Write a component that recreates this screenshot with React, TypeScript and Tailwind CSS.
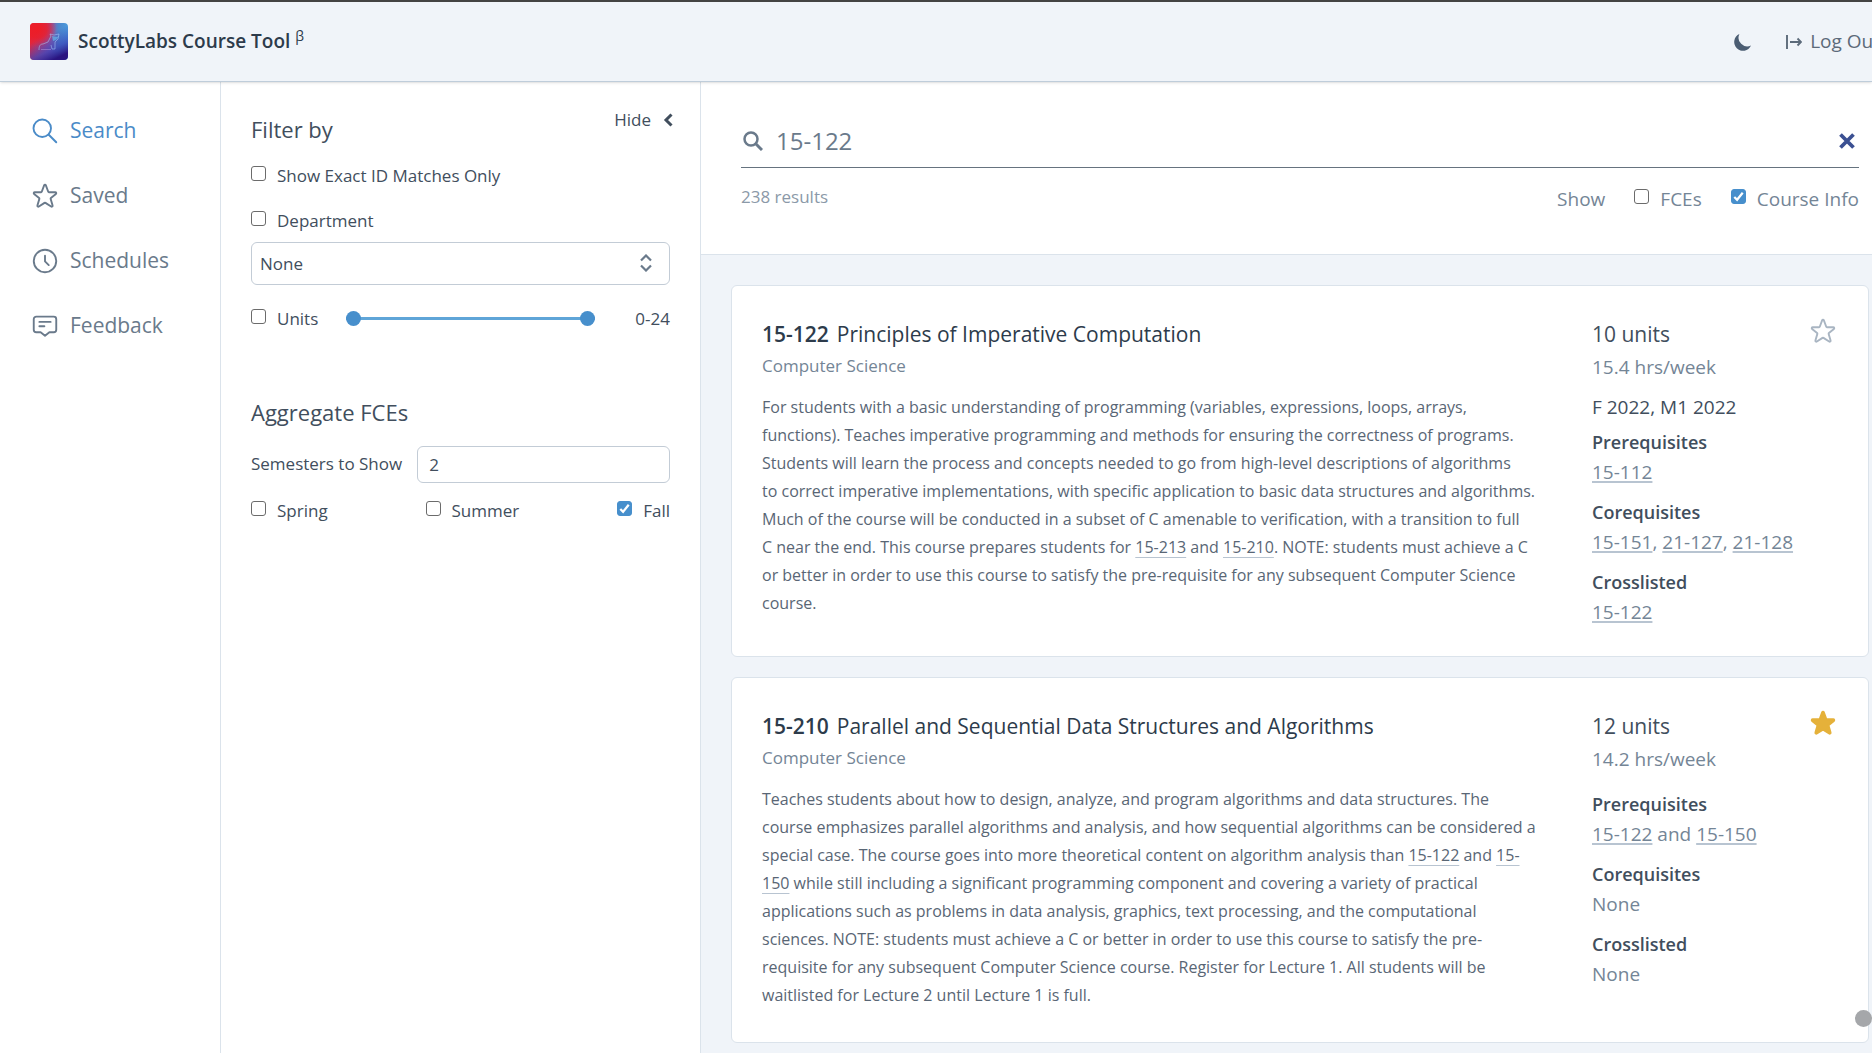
import React from "react";

type IconProps = { className?: string };

function SearchOutline({ className }: IconProps) {
  return (
    <svg viewBox="0 0 24 24" fill="none" stroke="currentColor" strokeWidth="1.5" strokeLinecap="round" strokeLinejoin="round" className={className} aria-hidden="true">
      <circle cx="9.8" cy="9.8" r="7" />
      <path d="M15 15 21 21" />
    </svg>
  );
}

function StarIcon({ className, filled = false }: IconProps & { filled?: boolean }) {
  return (
    <svg viewBox="0 0 24 24" fill={filled ? "currentColor" : "none"} stroke="currentColor" strokeWidth="1.5" strokeLinecap="round" strokeLinejoin="round" className={className} aria-hidden="true">
      <path d="M11.3 3.5a.75.75 0 0 1 1.4 0l1.9 5.1a.6.6 0 0 0 .55.4h5.1a.75.75 0 0 1 .47 1.34l-4 3.3a.6.6 0 0 0-.2.65l1.55 5.25a.78.78 0 0 1-1.18.86l-4.5-2.9a.7.7 0 0 0-.78 0l-4.5 2.9a.78.78 0 0 1-1.18-.86l1.55-5.25a.6.6 0 0 0-.2-.65l-4-3.3A.75.75 0 0 1 3.75 9h5.1a.6.6 0 0 0 .55-.4z" />
    </svg>
  );
}

function ClockIcon({ className }: IconProps) {
  return (
    <svg viewBox="0 0 24 24" fill="none" stroke="currentColor" strokeWidth="1.5" strokeLinecap="round" strokeLinejoin="round" className={className} aria-hidden="true">
      <circle cx="12" cy="12" r="9" />
      <path d="M12 7.8V12.3l3 3" />
    </svg>
  );
}

function FeedbackIcon({ className }: IconProps) {
  return (
    <svg viewBox="0 0 24 24" fill="none" stroke="currentColor" strokeWidth="1.5" strokeLinecap="round" strokeLinejoin="round" className={className} aria-hidden="true">
      <path d="M5 4.5h14a2 2 0 0 1 2 2v8.5a2 2 0 0 1-2 2h-3.5L12 19.8 8.5 17H5a2 2 0 0 1-2-2V6.5a2 2 0 0 1 2-2z" />
      <path d="M7.5 8.7h9M7.5 12.2h4" />
    </svg>
  );
}

function Logo() {
  return (
    <svg viewBox="0 0 38 37" className="h-[37px] w-[38px]" aria-hidden="true">
      <defs>
        <linearGradient id="logo-base" x1="0" y1="0" x2="1" y2="0">
          <stop offset="0" stopColor="#e5253a" />
          <stop offset="0.5" stopColor="#9a4a9c" />
          <stop offset="0.75" stopColor="#4d86cc" />
          <stop offset="1" stopColor="#4b9bdc" />
        </linearGradient>
        <linearGradient id="logo-depth" x1="0.3" y1="0.4" x2="0.6" y2="1">
          <stop offset="0" stopColor="#3a4cc0" stopOpacity="0" />
          <stop offset="0.6" stopColor="#3a45b8" stopOpacity="0.75" />
          <stop offset="1" stopColor="#2a1480" />
        </linearGradient>
        <radialGradient id="logo-warm" cx="0.2" cy="0.15" r="0.5">
          <stop offset="0" stopColor="#ee1c25" />
          <stop offset="0.5" stopColor="#ee1c25" stopOpacity="0.8" />
          <stop offset="1" stopColor="#ee1c25" stopOpacity="0" />
        </radialGradient>
      </defs>
      <rect width="38" height="37" rx="4" fill="url(#logo-base)" />
      <rect width="38" height="37" rx="4" fill="url(#logo-depth)" />
      <rect width="38" height="37" rx="4" fill="url(#logo-warm)" />
      <path d="M22 13l5 1 2-1-3 4-3 1z" fill="#62c4f0" fillOpacity="0.6" />
      <path d="M9 27c0-4 1-6 4-6l5-2 3-6-1-2 4 1 5-1-1 5-3 3v7h-3l-1-4" fill="none" stroke="#9fc0f2" strokeOpacity="0.75" strokeWidth="0.8" />
      <path d="M11 26.5h10" stroke="#b79be0" strokeOpacity="0.6" strokeWidth="0.8" />
    </svg>
  );
}

const checkboxClass =
  "peer size-[15px] shrink-0 cursor-pointer appearance-none rounded-[3px] border border-[#6b6b6b] bg-white checked:border-[#478fcc] checked:bg-[#478fcc]";

function Check({ label, checked = false, large = false }: { label: string; checked?: boolean; large?: boolean }) {
  return (
    <label className={large ? "flex items-center gap-[11px] text-[19px] leading-6" : "flex items-center gap-[11px] text-[17px] leading-6"}>
      <span className="relative mb-[5px] flex">
        <input type="checkbox" defaultChecked={checked} className={checkboxClass} />
        <svg viewBox="0 0 16 16" className="pointer-events-none absolute inset-0 hidden size-[15px] peer-checked:block" aria-hidden="true">
          <path d="M3.5 8.5 6.5 11.5 12.5 4" fill="none" stroke="#fff" strokeWidth="2.4" />
        </svg>
      </span>
      {label}
    </label>
  );
}

const navItems = [
  { label: "Search", Icon: SearchOutline, active: true },
  { label: "Saved", Icon: StarIcon, active: false },
  { label: "Schedules", Icon: ClockIcon, active: false },
  { label: "Feedback", Icon: FeedbackIcon, active: false },
];

function Ref({ children }: { children: string }) {
  return (
    <a href="#" className="underline decoration-[#b8c4d1] decoration-1 underline-offset-4">
      {children}
    </a>
  );
}

function SideRef({ children }: { children: string }) {
  return (
    <a href="#" className="underline decoration-[#b8c4d1] decoration-2 underline-offset-2">
      {children}
    </a>
  );
}

type Course = {
  id: string;
  title: string;
  units: string;
  hours: string;
  offered?: string;
  saved: boolean;
  description: React.ReactNode;
  details: [string, React.ReactNode][];
};

const courses: Course[] = [
  {
    id: "15-122",
    title: "Principles of Imperative Computation",
    units: "10 units",
    hours: "15.4 hrs/week",
    offered: "F 2022, M1 2022",
    saved: false,
    description: (
      <>
        For students with a basic understanding of programming (variables, expressions, loops, arrays, functions). Teaches
        imperative programming and methods for ensuring the correctness of programs. Students will learn the process and
        concepts needed to go from high-level descriptions of algorithms to&nbsp;correct imperative implementations, with
        specific application to basic data structures and algorithms. Much of the course will be conducted in a subset of C
        amenable to verification, with a transition to full C&nbsp;near the end. This course prepares students for{" "}
        <Ref>15-213</Ref> and <Ref>15-210</Ref>. NOTE: students must achieve a C or&nbsp;better in order to use this course
        to satisfy the pre-requisite for any subsequent Computer Science course.
      </>
    ),
    details: [
      ["Prerequisites", <SideRef>15-112</SideRef>],
      ["Corequisites", <><SideRef>15-151</SideRef>, <SideRef>21-127</SideRef>, <SideRef>21-128</SideRef></>],
      ["Crosslisted", <SideRef>15-122</SideRef>],
    ],
  },
  {
    id: "15-210",
    title: "Parallel and Sequential Data Structures and Algorithms",
    units: "12 units",
    hours: "14.2 hrs/week",
    saved: true,
    description: (
      <>
        Teaches students about how to design, analyze, and program algorithms and data structures. The course emphasizes
        parallel algorithms and analysis, and how sequential algorithms can be considered a special case. The course goes
        into more theoretical content on algorithm analysis than <Ref>15-122</Ref> and <Ref>15-150</Ref> while still
        including a significant programming component and covering a variety of practical applications such as problems in
        data analysis, graphics, text processing, and the computational sciences. NOTE: students must achieve a C or better
        in order to use this course to satisfy the pre-requisite for any subsequent Computer Science course. Register for
        Lecture 1. All students will be waitlisted for Lecture 2 until Lecture 1 is full.
      </>
    ),
    details: [
      ["Prerequisites", <><SideRef>15-122</SideRef> and <SideRef>15-150</SideRef></>],
      ["Corequisites", "None"],
      ["Crosslisted", "None"],
    ],
  },
];

function CourseCard({ course }: { course: Course }) {
  return (
    <article className="flex rounded-md border border-[#dbe3eb] bg-white px-[30px] pt-[30px] pb-[29px]">
      <div className="min-w-0 flex-1 pb-1">
        <h2 className="text-[21px] leading-9 text-[#2d3b4b]">
          <span className="mr-2 font-semibold">{course.id}</span>
          {course.title}
        </h2>
        <p className="text-[17px] leading-7 text-[#748596]">Computer Science</p>
        <p className="mt-[13px] text-[16px] leading-7 text-[#596675]">{course.description}</p>
      </div>
      <div className="ml-[50px] w-[246px] shrink-0 text-[19px]">
        <div className="flex items-start justify-between">
          <p className="text-[21px] leading-9 text-[#414e5d]">{course.units}</p>
          <button type="button" aria-label={course.saved ? "Remove from saved" : "Save course"} className={course.saved ? "cursor-pointer text-[#e5b13a]" : "cursor-pointer text-[#a9b5c2]"}>
            <StarIcon filled={course.saved} className="size-[30px]" />
          </button>
        </div>
        <p className="leading-[30px] text-[#748596]">{course.hours}</p>
        <div className="pt-[10px] pb-[5px]">
          {course.offered && <p className="leading-[30px] text-[#414e5d]">{course.offered}</p>}
        </div>
        <div className="flex flex-col gap-[10px]">
          {course.details.map(([name, value]) => (
            <section key={name}>
              <h3 className="text-[18px] leading-[30px] font-semibold text-[#414e5d]">{name}</h3>
              <p className="leading-[30px] text-[#748596]">{value}</p>
            </section>
          ))}
        </div>
      </div>
    </article>
  );
}

export default function App() {
  return (
    <div className="flex h-screen flex-col overflow-hidden bg-white font-['Open_Sans','Noto_Sans',sans-serif] text-[#414e5d]">
      <header className="relative z-10 flex h-[82px] shrink-0 items-center justify-between border-t-2 border-b border-t-[#434343] border-b-[#bfcdda] bg-[#f0f4f9] pl-[30px] shadow-sm">
        <div className="flex items-center gap-[10px]">
          <Logo />
          <h1 className="text-[19px] font-semibold text-[#2d3b4b]">
            ScottyLabs Course Tool <sup className="text-[14px] font-normal">β</sup>
          </h1>
        </div>
        <div className="-mr-2 flex items-center gap-8 whitespace-nowrap">
          <button type="button" aria-label="Toggle dark mode" className="cursor-pointer text-[#4b5d73]">
            <svg viewBox="0 0 20 20" fill="currentColor" className="size-[22px]" aria-hidden="true">
              <path d="M17.293 13.293A8 8 0 0 1 6.707 2.707a8 8 0 1 0 10.586 10.586z" />
            </svg>
          </button>
          <button type="button" className="flex cursor-pointer items-center gap-2 text-[19px] text-[#5c6a7a]">
            <svg viewBox="0 0 16 14" fill="none" stroke="currentColor" strokeWidth="1.9" className="h-[14px] w-4" aria-hidden="true">
              <path d="M1 0v14M4 7h11M11.5 3.5 15 7l-3.5 3.5" />
            </svg>
            Log Out
          </button>
        </div>
      </header>

      <div className="flex min-h-0 flex-1">
        <nav className="w-[221px] shrink-0 border-r border-[#dbe3eb] pt-4 pl-[30px]">
          {navItems.map(({ label, Icon, active }) => (
            <a key={label} href="#" className={active ? "flex h-[65px] items-center gap-[10px] text-[21px] text-[#4a8bc8]" : "flex h-[65px] items-center gap-[10px] text-[21px] text-[#6a7a8b]"}>
              <Icon className="size-[30px]" />
              {label}
            </a>
          ))}
        </nav>

        <aside className="w-[480px] shrink-0 border-r border-[#dbe3eb] px-[30px] pt-6">
          <div className="flex items-start justify-between">
            <h2 className="mt-[7px] text-[22px] leading-8">Filter by</h2>
            <button type="button" className="-mr-[3px] flex cursor-pointer items-center gap-3 text-[17px] leading-7">
              Hide
              <svg viewBox="0 0 10 14" fill="none" stroke="currentColor" strokeWidth="3" className="h-[14px] w-[10px]" aria-hidden="true">
                <path d="M8.5 1.5 3 7l5.5 5.5" />
              </svg>
            </button>
          </div>
          <div className="mt-[19px] flex flex-col gap-[21px]">
            <Check label="Show Exact ID Matches Only" />
            <Check label="Department" />
          </div>
          <div className="relative mt-[9px]">
            <select aria-label="Department" className="h-[43px] w-full appearance-none rounded-md border border-[#c3ccd6] bg-white px-2 text-[17px]">
              <option>None</option>
            </select>
            <svg viewBox="0 0 12 18" fill="none" stroke="#6a7a8b" strokeWidth="2.2" className="pointer-events-none absolute top-3 right-[18px] h-[18px] w-3" aria-hidden="true">
              <path d="M1 6.5 6 1.5l5 5M1 11.5l5 5 5-5" />
            </svg>
          </div>
          <div className="mt-[21px] flex items-center">
            <Check label="Units" />
            <div className="relative ml-7 flex h-4 w-[249px] items-center">
              <div className="h-[3px] w-full bg-[#5fa5d8]" />
              <input type="range" min="0" max="24" defaultValue="0" aria-label="Minimum units" className="pointer-events-none absolute inset-0 w-full appearance-none bg-transparent [&::-webkit-slider-thumb]:size-[15px] [&::-webkit-slider-thumb]:appearance-none [&::-webkit-slider-thumb]:rounded-full [&::-webkit-slider-thumb]:bg-[#478fcc]" />
              <input type="range" min="0" max="24" defaultValue="24" aria-label="Maximum units" className="pointer-events-none absolute inset-0 w-full appearance-none bg-transparent [&::-webkit-slider-thumb]:size-[15px] [&::-webkit-slider-thumb]:appearance-none [&::-webkit-slider-thumb]:rounded-full [&::-webkit-slider-thumb]:bg-[#478fcc]" />
            </div>
            <span className="ml-auto text-[17px]">0-24</span>
          </div>
          <h2 className="mt-16 text-[22px] leading-8">Aggregate FCEs</h2>
          <div className="mt-[18px] flex items-center gap-[15px]">
            <label htmlFor="semesters" className="text-[17px] whitespace-nowrap">Semesters to Show</label>
            <input id="semesters" type="text" defaultValue="2" className="h-[37px] min-w-0 flex-1 rounded-md border border-[#c3ccd6] px-[11px] text-[17px]" />
          </div>
          <div className="mt-4 flex justify-between">
            <Check label="Spring" />
            <Check label="Summer" />
            <Check label="Fall" checked />
          </div>
        </aside>

        <main className="flex min-w-0 flex-1 flex-col bg-[#f0f4f9]">
          <div className="h-[173px] shrink-0 border-b border-[#dbe3eb] bg-white pt-[34px] pr-[13px] pl-10">
            <div className="flex h-[52px] items-center border-b border-[#66737f] pb-[2px]">
              <svg viewBox="0 0 20 20" fill="none" stroke="#6a7a8b" strokeWidth="2.5" className="ml-[2px] size-5" aria-hidden="true">
                <circle cx="8" cy="8" r="6.5" />
                <path d="M12.5 12.5 19 19" strokeWidth="3" />
              </svg>
              <input type="text" aria-label="Search courses" defaultValue="15-122" className="ml-[13px] min-w-0 flex-1 bg-transparent text-[24px] text-[#6a7a8b] outline-none" />
              <button type="button" aria-label="Clear search" className="mr-1 cursor-pointer">
                <svg viewBox="0 0 16 16" fill="none" stroke="#3b5092" strokeWidth="3.8" className="size-4" aria-hidden="true">
                  <path d="m1.5 1.5 13 13M14.5 1.5l-13 13" />
                </svg>
              </button>
            </div>
            <div className="flex items-start justify-between pt-[15px]">
              <p className="text-[17px] leading-7 text-[#8b99a8]">238 results</p>
              <div className="flex items-center gap-[29px] pt-1 text-[#748596]">
                <span className="text-[19px] leading-6">Show</span>
                <Check label="FCEs" large />
                <Check label="Course Info" checked large />
              </div>
            </div>
          </div>
          <div className="flex flex-1 flex-col gap-5 overflow-hidden pt-[30px] pr-[3px] pl-[30px]">
            {courses.map((course) => (
              <CourseCard key={course.id} course={course} />
            ))}
          </div>
        </main>
      </div>
      <div className="absolute right-0 bottom-[26px] size-[17px] rounded-full bg-[#a5a7aa]" />
    </div>
  );
}
